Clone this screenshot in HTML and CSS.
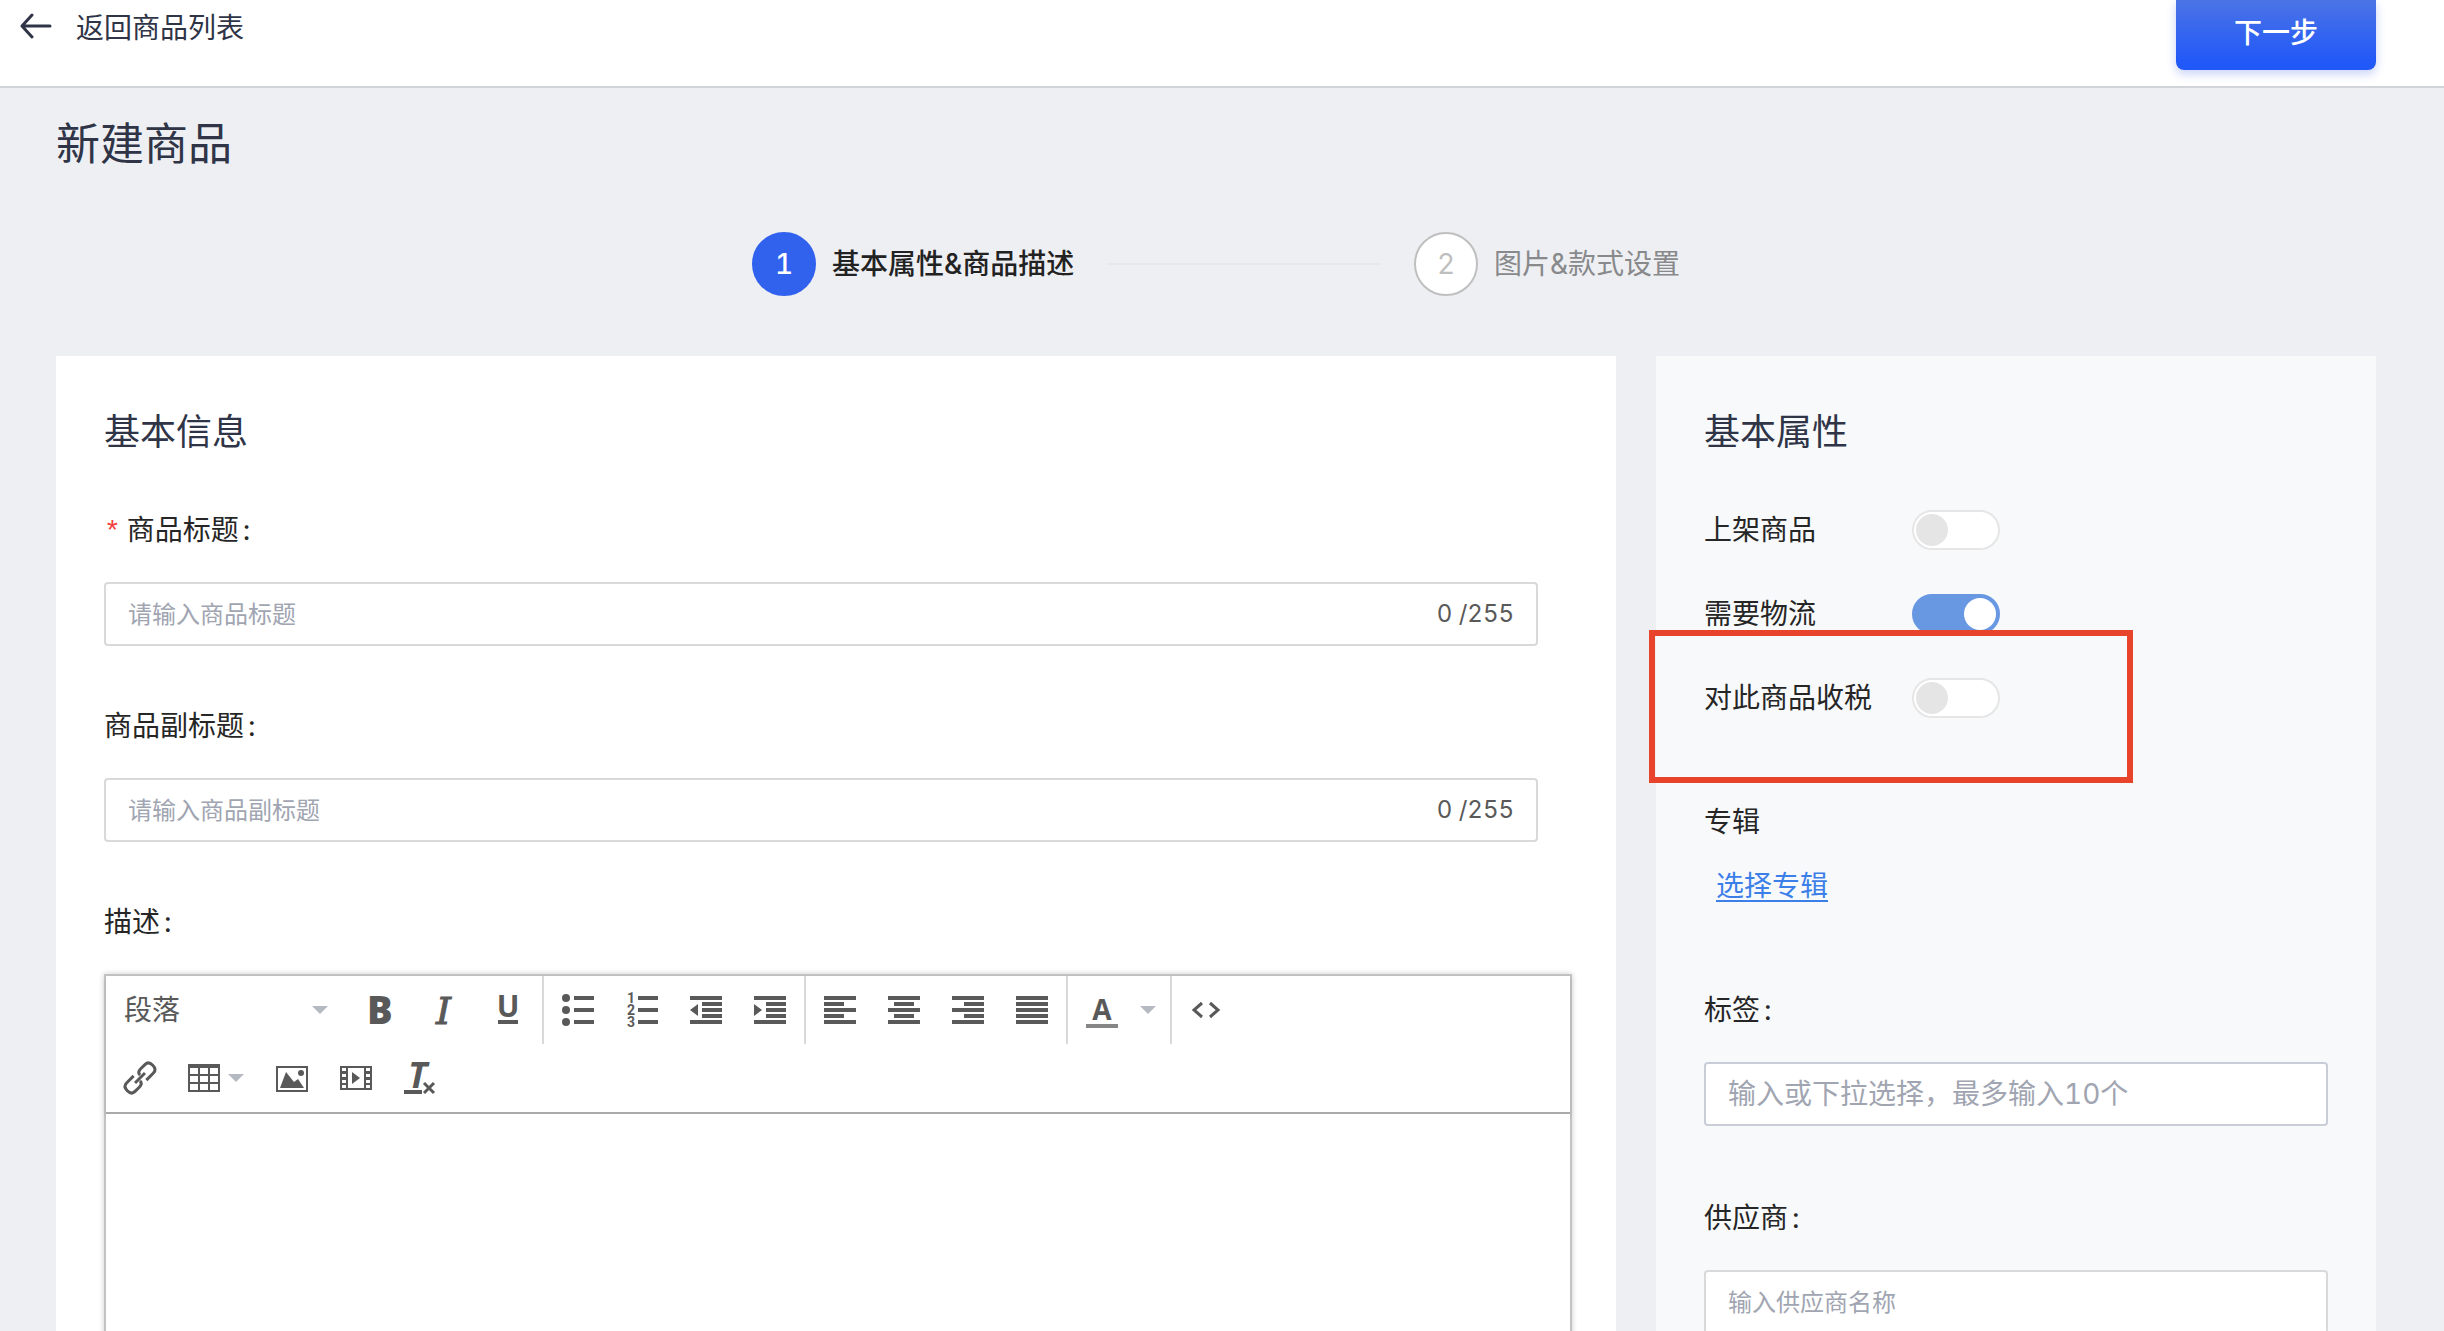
FILE: index.html
```html
<!DOCTYPE html>
<html lang="zh-CN">
<head>
    <meta charset="UTF-8">
    <meta name="viewport" content="width=device-width, initial-scale=1.0">
    <title>新建商品</title>
    <link rel="stylesheet" href="styles.css">
</head>
<body>
    <header class="topbar">
        <a class="back" href="#">
            <svg width="32" height="28" viewBox="0 0 32 28"><path d="M12 3 L2 14 L12 25 M2 14 H30" /></svg>
            返回商品列表
        </a>
        <button class="next" type="button">下一步</button>
    </header>

    <main class="page">
        <h1>新建商品</h1>

        <ol class="steps">
            <li class="step active"><span class="num">1</span>基本属性&amp;商品描述</li>
            <li class="line"></li>
            <li class="step"><span class="num">2</span>图片&amp;款式设置</li>
        </ol>

        <div class="columns">
            <section class="card">
                <h2>基本信息</h2>
                <div class="field">
                    <label for="title"><span class="required">*</span>商品标题<span class="colon">:</span></label>
                    <div class="input-box counted">
                        <input type="text" id="title" placeholder="请输入商品标题">
                        <span class="count">0 /255</span>
                    </div>
                </div>
                <div class="field">
                    <label for="subtitle">商品副标题<span class="colon">:</span></label>
                    <div class="input-box counted">
                        <input type="text" id="subtitle" placeholder="请输入商品副标题">
                        <span class="count">0 /255</span>
                    </div>
                </div>
                <div class="field">
                    <label for="desc">描述<span class="colon">:</span></label>
                    <div class="editor">
                        <div class="toolbar">
                            <div class="row">
                                <div class="group">
                                    <div class="format">
                                        <select aria-label="格式"><option>段落</option><option>标题</option></select>
                                        <svg class="caret" width="16" height="8" viewBox="0 0 16 8"><path d="M0 0h16l-8 8z" /></svg>
                                    </div>
                                    <button type="button" aria-label="粗体"><svg viewBox="0 0 32 32"><text class="ic-b" x="3" y="30">B</text></svg></button>
                                    <button type="button" aria-label="斜体"><svg viewBox="0 0 32 32"><text class="ic-i" x="8" y="30">I</text></svg></button>
                                    <button type="button" aria-label="下划线"><svg viewBox="0 0 32 32"><text class="ic-u" x="16" y="23">U</text><path d="M6 26h20v4H6z" /></svg></button>
                                </div>
                                <div class="group">
                                    <button type="button" aria-label="项目符号"><svg viewBox="0 0 32 32"><circle cx="4" cy="4" r="4" /><circle cx="4" cy="16" r="4" /><circle cx="4" cy="28" r="4" /><path d="M12 2h20v4H12zM12 14h20v4H12zM12 26h20v4H12z" /></svg></button>
                                    <button type="button" aria-label="编号列表"><svg viewBox="0 0 32 32"><text class="ic-n" x="1" y="9">1</text><text class="ic-n" x="1" y="21">2</text><text class="ic-n" x="1" y="33">3</text><path d="M12 2h20v4H12zM12 14h20v4H12zM12 26h20v4H12z" /></svg></button>
                                    <button type="button" aria-label="减少缩进"><svg viewBox="0 0 32 32"><path d="M0 2h32v4H0zM12 8h20v4H12zM12 14h20v4H12zM12 20h20v4H12zM0 26h32v4H0zM8 10v12l-8-6z" /></svg></button>
                                    <button type="button" aria-label="增加缩进"><svg viewBox="0 0 32 32"><path d="M0 2h32v4H0zM12 8h20v4H12zM12 14h20v4H12zM12 20h20v4H12zM0 26h32v4H0zM0 10v12l8-6z" /></svg></button>
                                </div>
                                <div class="group">
                                    <button type="button" aria-label="左对齐"><svg viewBox="0 0 32 32"><path d="M0 2h32v4H0zM0 8h20v4H0zM0 14h32v4H0zM0 20h20v4H0zM0 26h32v4H0z" /></svg></button>
                                    <button type="button" aria-label="居中"><svg viewBox="0 0 32 32"><path d="M0 2h32v4H0zM6 8h20v4H6zM0 14h32v4H0zM6 20h20v4H6zM0 26h32v4H0z" /></svg></button>
                                    <button type="button" aria-label="右对齐"><svg viewBox="0 0 32 32"><path d="M0 2h32v4H0zM12 8h20v4H12zM0 14h32v4H0zM12 20h20v4H12zM0 26h32v4H0z" /></svg></button>
                                    <button type="button" aria-label="两端对齐"><svg viewBox="0 0 32 32"><path d="M0 2h32v4H0zM0 8h32v4H0zM0 14h32v4H0zM0 20h32v4H0zM0 26h32v4H0z" /></svg></button>
                                </div>
                                <div class="group">
                                    <button class="color" type="button" aria-label="文字颜色">
                                        <svg viewBox="0 0 32 32"><text class="ic-a" x="16" y="26">A</text><path class="swatch" d="M0 30h32v4H0z" /></svg>
                                        <svg class="caret" width="16" height="8" viewBox="0 0 16 8"><path d="M0 0h16l-8 8z" /></svg>
                                    </button>
                                </div>
                                <div class="group">
                                    <button type="button" aria-label="源代码"><svg viewBox="0 0 32 32"><path class="stroke" d="M12 9 L4 16 L12 23 M20 9 L28 16 L20 23" /></svg></button>
                                </div>
                            </div>
                            <div class="row">
                                <div class="group">
                                    <button type="button" aria-label="链接"><svg viewBox="0 0 32 32"><g class="stroke" transform="rotate(-45 16 16)"><path d="M13 10H3Q-2 10 -2 16T3 22H9Q14 22 14 18M19 22H29Q34 22 34 16T29 10H23Q18 10 18 14M9 16H23" /></g></svg></button>
                                    <button class="table" type="button" aria-label="表格">
                                        <svg viewBox="0 0 32 32"><path fill-rule="evenodd" d="M0 2h32v28H0zM2 6v6h8V6zM12 6v6h8V6zM22 6v6h8V6zM2 14v6h8v-6zM12 14v6h8v-6zM22 14v6h8v-6zM2 22v6h8v-6zM12 22v6h8v-6zM22 22v6h8v-6z" /></svg>
                                        <svg class="caret" width="16" height="8" viewBox="0 0 16 8"><path d="M0 0h16l-8 8z" /></svg>
                                    </button>
                                    <button type="button" aria-label="图片"><svg viewBox="0 0 32 32"><path fill-rule="evenodd" d="M0 4h32v26H0zM2 6v22h28V6z" /><path d="M4 26L10 10L18 20L22 17L28 26z" /><circle cx="25" cy="11" r="3" /></svg></button>
                                    <button type="button" aria-label="视频"><svg viewBox="0 0 32 32"><path fill-rule="evenodd" d="M0 4h32v24H0zM8 6v20h16V6zM2 6v3h4V6zM2 12v3h4v-3zM2 18v3h4v-3zM2 23v3h4v-3zM26 6v3h4V6zM26 12v3h4v-3zM26 18v3h4v-3zM26 23v3h4v-3z" /><path d="M12 10v12l8-6z" /></svg></button>
                                    <button type="button" aria-label="清除格式"><svg viewBox="0 0 32 32"><text class="ic-t" x="4" y="26">T</text><path d="M0 28h18v4H0z" /><path class="stroke" d="M20 21L30 31M30 21L20 31" /></svg></button>
                                </div>
                            </div>
                        </div>
                        <textarea id="desc"></textarea>
                    </div>
                </div>
            </section>

            <section class="card side">
                <h2>基本属性</h2>
                <div class="switch-row">
                    <label for="onsale">上架商品</label>
                    <input class="switch" type="checkbox" id="onsale">
                </div>
                <div class="switch-row">
                    <label for="shipping">需要物流</label>
                    <input class="switch" type="checkbox" id="shipping" checked>
                </div>
                <div class="switch-row marked">
                    <label for="tax">对此商品收税</label>
                    <input class="switch" type="checkbox" id="tax">
                </div>
                <div class="album">
                    <p>专辑</p>
                    <a href="#">选择专辑</a>
                </div>
                <div class="field">
                    <label for="tags">标签<span class="colon">:</span></label>
                    <div class="input-box tags">
                        <input type="text" id="tags" placeholder="输入或下拉选择，最多输入10个">
                    </div>
                </div>
                <div class="field">
                    <label for="vendor">供应商<span class="colon">:</span></label>
                    <div class="input-box">
                        <input type="text" id="vendor" placeholder="输入供应商名称">
                    </div>
                </div>
            </section>
        </div>
    </main>
</body>
</html>
```
FILE: styles.css
```css
*, *::before, *::after {
    box-sizing: border-box;
}
body {
    margin: 0;
    height: 100vh;
    overflow: hidden;
    background: #eeeff3;
    color: #262626;
    font-family: Inter, "Noto Sans CJK SC", sans-serif;
    font-size: 28px;
    line-height: 40px;
    font-variant-numeric: tabular-nums;
}
button, input, select, textarea {
    font-family: inherit;
    font-size: inherit;
    font-variant-numeric: inherit;
    color: inherit;
}
h1, h2, p, ol {
    margin: 0;
    padding: 0;
    font-weight: 400;
}

/* top bar */
.topbar {
    display: flex;
    justify-content: space-between;
    align-items: flex-start;
    height: 88px;
    padding: 0 68px 0 20px;
    background: #fff;
    border-bottom: 2px solid #d1d4da;
}
.back {
    display: flex;
    align-items: center;
    gap: 24px;
    padding-top: 8px;
    color: #2f3447;
    text-decoration: none;
}
.back svg {
    margin-top: -4px;
    fill: none;
    stroke: #2f3447;
    stroke-width: 3;
    stroke-linecap: round;
    stroke-linejoin: round;
}
.next {
    width: 200px;
    height: 70px;
    padding: 0 0 8px;
    border: none;
    border-radius: 0 0 8px 8px;
    background: linear-gradient(#4b74e6, #2158f8 90%);
    box-shadow: 0 4px 10px rgba(40, 80, 220, 0.25);
    color: #fff;
    font-weight: 500;
    cursor: pointer;
}

.page {
    padding: 26px 68px 0 56px;
}
h1 {
    color: #2f3447;
    font-size: 44px;
    line-height: 60px;
}

/* steps */
.steps {
    display: flex;
    align-items: center;
    gap: 32px;
    width: 928px;
    margin: 58px auto 60px;
    list-style: none;
}
.step {
    display: flex;
    align-items: center;
    gap: 16px;
    color: #88898b;
}
.step.active {
    color: #222;
    font-weight: 500;
}
.num {
    display: flex;
    align-items: center;
    justify-content: center;
    width: 64px;
    height: 64px;
    border: 2px solid #bfbfbf;
    border-radius: 50%;
    background: #fff;
    color: #bfbfbf;
}
.active .num {
    border-color: #3162ee;
    background: #3162ee;
    color: #fff;
}
.line {
    flex: 1;
    height: 2px;
    background: #e7e8ea;
}

/* cards */
.columns {
    display: grid;
    grid-template-columns: 13fr 6fr;
    gap: 40px;
}
.card {
    min-width: 0;
    padding: 48px 44px 48px 48px;
    background: #fff;
}
.side {
    padding-right: 48px;
    background: #f8f9fb;
}
h2 {
    margin-bottom: 50px;
    color: #2f3447;
    font-size: 36px;
    line-height: 56px;
}
.field {
    margin-bottom: 60px;
}
.side .field {
    margin-bottom: 72px;
}
.field label {
    display: block;
    margin-bottom: 32px;
}
.required {
    margin-right: 6px;
    color: #f5413d;
    font-family: "Liberation Mono", monospace;
    line-height: 1;
}
.colon {
    margin-left: 4px;
}
.input-box {
    display: flex;
    align-items: center;
    height: 64px;
    padding: 0 22px;
    border: 2px solid #d9d9d9;
    border-radius: 4px;
    background: #fff;
    font-size: 24px;
}
.input-box.counted {
    margin-right: 34px;
}
.input-box.tags {
    border-color: #c8cdd7;
    font-size: 28px;
}
.input-box input {
    flex: 1;
    min-width: 0;
    height: 100%;
    padding: 0;
    border: none;
    outline: none;
    background: none;
}
.input-box input::placeholder {
    color: #a0a5b1;
}
.count {
    color: #595959;
}

/* rich text editor */
.editor {
    border: 2px solid #c3c3c3;
    box-shadow: 0 0 6px rgba(0, 0, 0, 0.2);
}
.toolbar {
    border-bottom: 2px solid #aaa;
    box-shadow: 0 2px 4px rgba(0, 0, 0, 0.1);
}
.row {
    display: flex;
}
.group {
    display: flex;
    padding: 0 2px;
}
.group + .group {
    border-left: 2px solid #d9d9d9;
}
.toolbar button {
    display: flex;
    align-items: center;
    justify-content: center;
    width: 64px;
    height: 68px;
    padding: 0;
    border: none;
    background: none;
    cursor: pointer;
}
.toolbar svg {
    width: 32px;
    height: 32px;
    fill: #595959;
    overflow: visible;
}
.toolbar svg.caret {
    width: 16px;
    height: 8px;
    fill: #b5bac2;
}
.toolbar .color {
    justify-content: space-between;
    width: 98px;
    padding: 0 12px 0 16px;
}
.toolbar .table {
    justify-content: space-between;
    width: 88px;
    padding: 0 16px;
    gap: 8px;
}
.toolbar .table svg {
    flex: none;
}
.toolbar .swatch {
    fill: #868686;
}
.toolbar .stroke {
    fill: none;
    stroke: #595959;
    stroke-width: 3;
}
.ic-b {
    font: 800 38px "Open Sans", sans-serif;
}
.ic-i {
    font: italic 400 38px "DejaVu Serif", serif;
    stroke: #595959;
    stroke-width: 1;
}
.ic-u {
    font: 700 30px "Open Sans", sans-serif;
    text-anchor: middle;
}
.ic-a {
    font: 700 28px "Open Sans", sans-serif;
    text-anchor: middle;
}
.ic-t {
    font: italic 700 36px "Open Sans", sans-serif;
}
.ic-n {
    font: 700 14px Roboto, sans-serif;
}
.format {
    position: relative;
    width: 240px;
}
.format select {
    width: 100%;
    height: 68px;
    padding: 0 16px;
    border: none;
    background: none;
    color: #595959;
    appearance: none;
}
.format .caret {
    position: absolute;
    top: 30px;
    right: 20px;
    pointer-events: none;
}
textarea {
    display: block;
    width: 100%;
    height: 400px;
    padding: 16px;
    border: none;
    outline: none;
    resize: none;
}

/* switches */
.switch-row {
    display: flex;
    align-items: center;
    margin-bottom: 44px;
}
.switch-row label {
    width: 208px;
}
.switch {
    appearance: none;
    width: 88px;
    height: 40px;
    margin: 0;
    padding: 2px;
    border: 2px solid #e6e6e6;
    border-radius: 20px;
    background: #fff;
    cursor: pointer;
}
.switch::before {
    content: "";
    display: block;
    width: 32px;
    height: 32px;
    border-radius: 50%;
    background: #e5e5e5;
}
.switch:checked {
    border-color: #6998e3;
    background: #6998e3;
}
.switch:checked::before {
    margin-left: auto;
    background: #fff;
}

/* red frame around the tax switch */
.marked {
    position: relative;
    margin-bottom: 84px;
}
.marked::after {
    content: "";
    position: absolute;
    top: -48px;
    left: -55px;
    width: 484px;
    height: 153px;
    border: 6px solid #e8432b;
    pointer-events: none;
}
.album {
    margin-bottom: 84px;
}
.album p {
    margin-bottom: 24px;
}
.album a {
    display: block;
    width: fit-content;
    margin-left: 12px;
    color: #3c7fe8;
    text-underline-offset: 4px;
}
```
